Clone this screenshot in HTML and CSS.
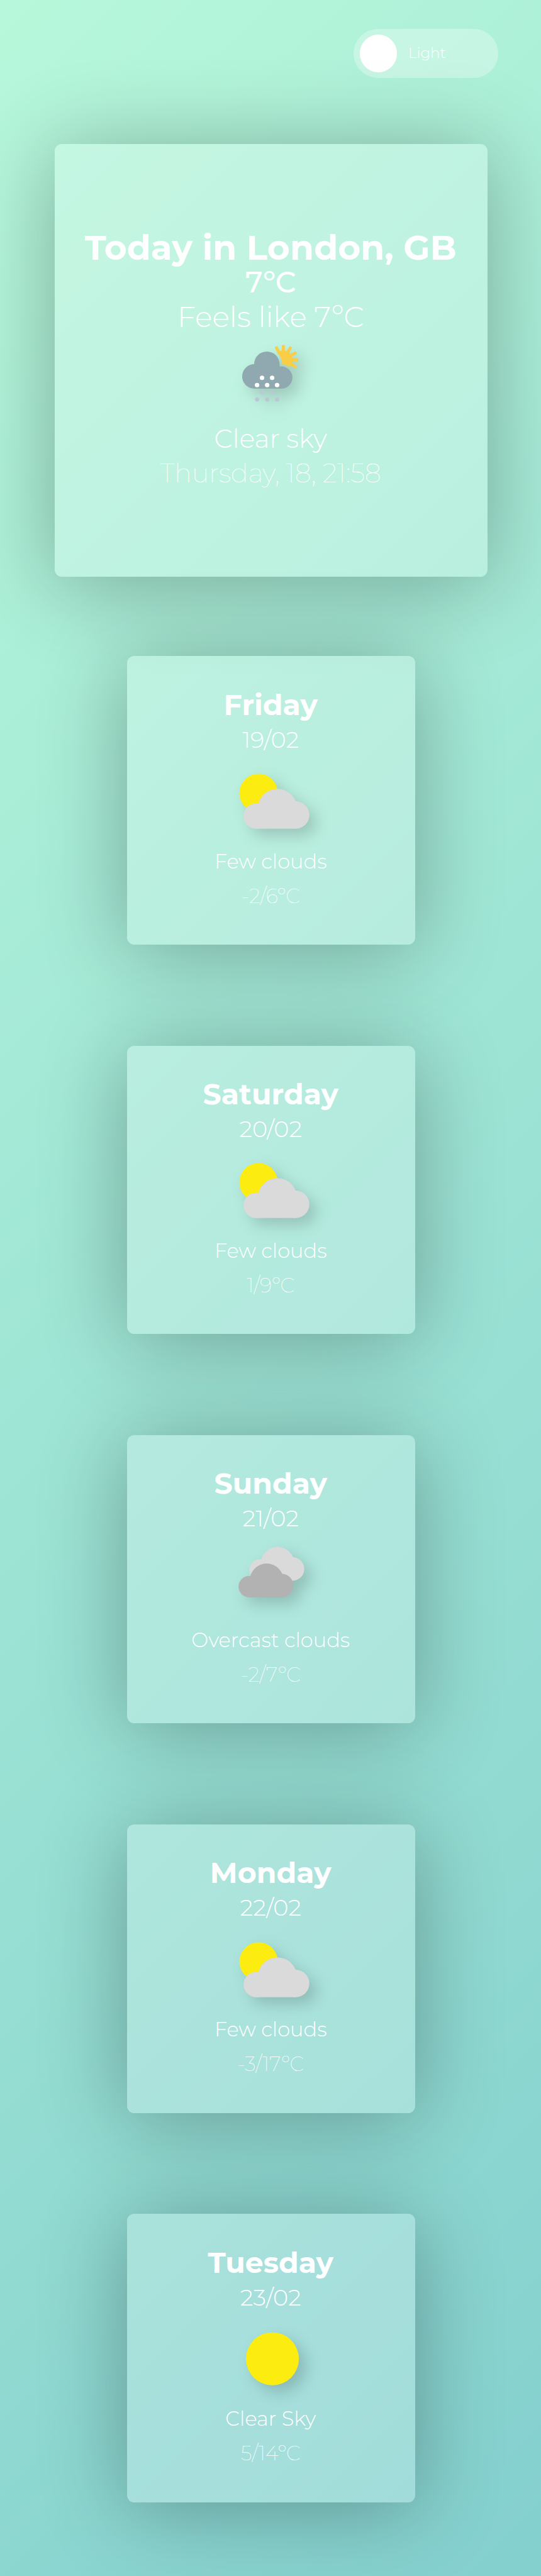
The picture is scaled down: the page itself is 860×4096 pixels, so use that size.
FILE: index.html
```html
<!DOCTYPE html>
<html lang="en">
<head>
<meta charset="utf-8">
<title>Weather</title>
<link rel="stylesheet" href="styles.css">
</head>
<body>
<svg class="defs" aria-hidden="true">
  <symbol id="few" viewBox="0 0 180 180">
    <circle cx="64.3" cy="74.7" r="40" fill="#fcec10"/>
    <g fill="#dadada">
      <circle cx="59.3" cy="122.4" r="26.3"/>
      <circle cx="103.3" cy="107" r="41"/>
      <circle cx="141.2" cy="120.2" r="28.5"/>
      <rect x="59.3" y="108" width="82" height="40.7"/>
    </g>
  </symbol>
  <symbol id="overcast" viewBox="0 0 180 180">
    <g fill="#dadada" transform="translate(22.7 -34.5)">
      <circle cx="44.8" cy="105.7" r="22.4"/>
      <circle cx="81" cy="92.7" r="35"/>
      <circle cx="112" cy="103.5" r="24.5"/>
      <rect x="44.8" y="94" width="67.2" height="34"/>
    </g>
    <g fill="#b2b2b2">
      <circle cx="44.8" cy="105.7" r="22.4"/>
      <circle cx="81" cy="92.7" r="35"/>
      <circle cx="112" cy="103.5" r="24.5"/>
      <rect x="44.8" y="94" width="67.2" height="34"/>
    </g>
  </symbol>
  <symbol id="sun" viewBox="0 0 180 180">
    <circle cx="93" cy="91.2" r="55" fill="#fcec10"/>
  </symbol>
</svg>

<header class="top">
  <div class="toggle"><span class="knob"></span><span class="mode">Light</span></div>
</header>

<main class="cards">
  <section class="card today">
    <h1>Today in London, GB</h1>
    <p class="temp">7ºC</p>
    <p class="feels">Feels like 7ºC</p>
    <svg class="icon" viewBox="0 0 180 180">
      <mask id="gap" maskUnits="userSpaceOnUse" x="0" y="0" width="600" height="600">
        <rect width="600" height="600" fill="#fff"/>
        <circle cx="256" cy="203" r="96" fill="#000"/>
        <circle cx="346" cy="286" r="83" fill="#000"/>
      </mask>
      <g transform="translate(-4 -6) scale(.33333)">
        <g mask="url(#gap)">
          <circle cx="359" cy="176" r="58" fill="#f9ce46"/>
        </g>
        <path d="M333 131L316 101M359 150V91M380 140L402 102M390 158L433 133M390 176H444M390 192L433 218" fill="none" stroke="#f9ce46" stroke-width="19" stroke-linecap="round"/>
        <g fill="#90a8b0">
          <circle cx="178.500" cy="279" r="76.500"/>
          <circle cx="256" cy="203" r="79.500"/>
          <circle cx="346" cy="286" r="69.500"/>
          <path d="M178.500 355.500V240H176.500V203H335.500V240H346V355.500z"/>
        </g>
        <g fill="#fff">
          <circle cx="226" cy="288" r="14"/><circle cx="289" cy="288" r="14"/>
          <circle cx="195" cy="333" r="14"/><circle cx="258" cy="333" r="14"/><circle cx="320" cy="333" r="14"/>
        </g>
        <g fill="#b8c8d4">
          <circle cx="226" cy="378" r="13.500"/><circle cx="289" cy="378" r="13.500"/>
          <circle cx="195" cy="423" r="13.500"/><circle cx="258" cy="423" r="13.500"/><circle cx="320" cy="423" r="13.500"/>
        </g>
      </g>
    </svg>
    <p class="sky">Clear sky</p>
    <p class="when">Thursday, 18, 21:58</p>
  </section>

  <section class="card">
    <h2>Friday</h2>
    <p class="date">19/02</p>
    <svg class="icon"><use href="#few"/></svg>
    <p class="desc">Few clouds</p>
    <p class="range">-2/6ºC</p>
  </section>
  <section class="card">
    <h2>Saturday</h2>
    <p class="date">20/02</p>
    <svg class="icon"><use href="#few"/></svg>
    <p class="desc">Few clouds</p>
    <p class="range">1/9ºC</p>
  </section>
  <section class="card">
    <h2>Sunday</h2>
    <p class="date">21/02</p>
    <svg class="icon"><use href="#overcast"/></svg>
    <p class="desc">Overcast clouds</p>
    <p class="range">-2/7ºC</p>
  </section>
  <section class="card">
    <h2>Monday</h2>
    <p class="date">22/02</p>
    <svg class="icon"><use href="#few"/></svg>
    <p class="desc">Few clouds</p>
    <p class="range">-3/17ºC</p>
  </section>
  <section class="card">
    <h2>Tuesday</h2>
    <p class="date">23/02</p>
    <svg class="icon"><use href="#sun"/></svg>
    <p class="desc">Clear Sky</p>
    <p class="range">5/14ºC</p>
  </section>
</main>
</body>
</html>
```
FILE: styles.css
```css
html {
  font-size: 22.9333px;
}

* {
  box-sizing: border-box;
  margin: 0;
  padding: 0;
}

body {
  height: 4096px;
  overflow: hidden;
  font-family: Montserrat, Inter, sans-serif;
  line-height: 2.4rem;
  color: #fff;
  background: linear-gradient(135deg, #b7f8db, #50a7c2) 0 0 / 200% 200% no-repeat;
}

.defs {
  position: absolute;
  width: 0;
  height: 0;
}

.top {
  display: flex;
  justify-content: flex-end;
  height: 10rem;
  padding: 2rem 2.98rem 0 0;
}

.toggle {
  display: flex;
  align-items: center;
  width: 10rem;
  height: 3.4rem;
  padding-left: .4rem;
  border-radius: 1.7rem;
  background: rgba(255, 255, 255, .3);
}

.knob {
  width: 2.6rem;
  height: 2.6rem;
  border-radius: 50%;
  background: #fff;
}

.mode {
  margin: -.05rem 0 0 .78rem;
  font-size: 1rem;
  font-weight: 300;
}

.cards {
  display: flex;
  flex-direction: column;
  align-items: center;
  gap: 7rem;
  padding-left: .1rem;
}

.card {
  display: flex;
  flex-direction: column;
  align-items: center;
  justify-content: center;
  width: 20rem;
  height: 20rem;
  border-radius: .5rem;
  background: rgba(255, 255, 255, .23);
  box-shadow: 0 .4rem 6rem rgba(0, 0, 0, .3);
  white-space: nowrap;
}

.card > * {
  margin-right: .08rem;
}

.today {
  width: 30rem;
  height: 30rem;
  margin-bottom: -1.5rem;
}

.card > .icon {
  width: 6rem;
  height: 6rem;
  margin-right: 0;
  overflow: visible;
  filter: drop-shadow(.5rem .5rem .5rem rgba(0, 0, 0, .17));
}

.card > h1 {
  margin-top: -.05rem;
  margin-bottom: .05rem;
  font-size: 2.4rem;
  font-weight: 700;
}

h2 {
  font-size: 2rem;
  font-weight: 700;
}

.temp {
  font-size: 2rem;
  font-weight: 500;
}

.feels {
  font-size: 2rem;
  font-weight: 300;
}

.sky {
  font-size: 1.8rem;
  font-weight: 300;
}

.when {
  font-size: 1.8rem;
  font-weight: 100;
  -webkit-text-stroke: .15px #fff;
}

.date {
  margin-top: -.05rem;
  margin-bottom: .05rem;
  font-size: 1.6rem;
  font-weight: 300;
}

.desc {
  font-size: 1.4rem;
  font-weight: 300;
}

.range {
  font-size: 1.4rem;
  font-weight: 100;
  -webkit-text-stroke: .15px #fff;
}
```
